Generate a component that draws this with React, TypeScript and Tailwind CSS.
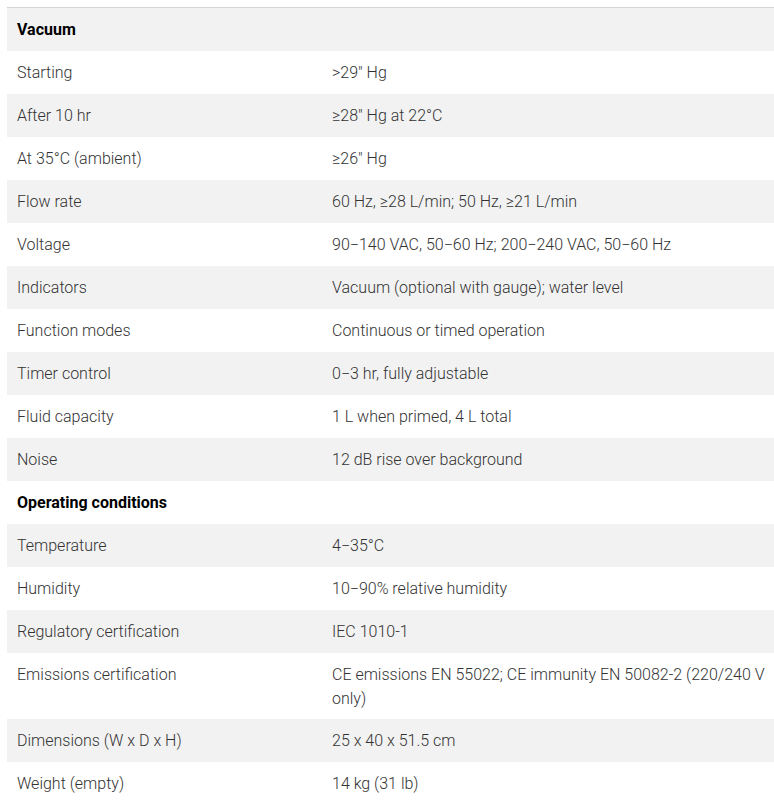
import React from "react";

type Row = { label: string; value?: string; header?: boolean };

const rows: Row[] = [
  { label: "Vacuum", header: true },
  { label: "Starting", value: ">29\u2033 Hg" },
  { label: "After 10 hr", value: "\u226528\u2033 Hg at 22\u00b0C" },
  { label: "At 35\u00b0C (ambient)", value: "\u226526\u2033 Hg" },
  { label: "Flow rate", value: "60 Hz, \u226528 L/min; 50 Hz, \u226521 L/min" },
  { label: "Voltage", value: "90\u2212140 VAC, 50\u221260 Hz; 200\u2212240 VAC, 50\u221260 Hz" },
  { label: "Indicators", value: "Vacuum (optional with gauge); water level" },
  { label: "Function modes", value: "Continuous or timed operation" },
  { label: "Timer control", value: "0\u22123 hr, fully adjustable" },
  { label: "Fluid capacity", value: "1 L when primed, 4 L total" },
  { label: "Noise", value: "12 dB rise over background" },
  { label: "Operating conditions", header: true },
  { label: "Temperature", value: "4\u221235\u00b0C" },
  { label: "Humidity", value: "10\u221290% relative humidity" },
  { label: "Regulatory certification", value: "IEC 1010-1" },
  { label: "Emissions certification", value: "CE emissions EN 55022; CE immunity EN 50082-2 (220/240 V only)" },
  { label: "Dimensions (W x D x H)", value: "25 x 40 x 51.5 cm" },
  { label: "Weight (empty)", value: "14 kg (31 lb)" },
];

export default function App() {
  return (
    <div className="bg-white min-h-[808px] pt-[7px] pl-[7px]" style={{ fontFamily: "Roboto, 'Liberation Sans', sans-serif" }}>
      <table className="w-[767px] border-collapse border-t border-[#d4d4d4] text-[16px] leading-[24px]">
        <tbody>
          {rows.map((r, i) => (
            <tr key={i} className={(i % 2 === 0 ? "bg-[#f2f2f2]" : "bg-white") + " h-[43px]"}>
              {r.header ? (
                <td colSpan={2} className="px-[10px] pt-[10px] pb-[8px] font-bold text-black align-top">
                  {r.label}
                </td>
              ) : (
                <>
                  <td className="w-[315px] px-[10px] pt-[10px] pb-[8px] font-light text-[#333333] align-top">{r.label}</td>
                  <td className="pl-[10px] pr-[2px] pt-[10px] pb-[8px] font-light text-[#333333] align-top">{r.value}</td>
                </>
              )}
            </tr>
          ))}
        </tbody>
      </table>
    </div>
  );
}
